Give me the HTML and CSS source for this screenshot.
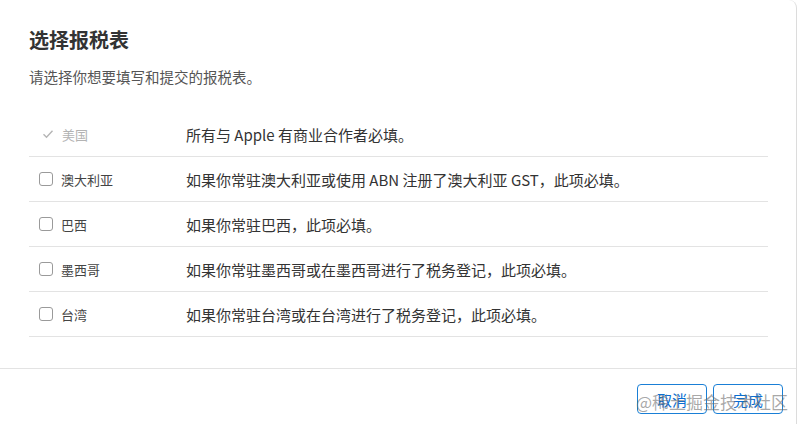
FILE: index.html
```html
<!DOCTYPE html>
<html lang="zh-CN">
<head>
  <meta charset="UTF-8">
  <meta name="viewport" content="width=device-width, initial-scale=1.0">
  <title>选择报税表</title>
  <link rel="stylesheet" href="styles.css">
</head>
<body>
  <div class="dialog">
    <div class="dialog-body">
      <h2 class="title">选择报税表</h2>
      <p class="intro">请选择你想要填写和提交的报税表。</p>

      <div class="form-list">
        <div class="form-row">
          <div class="form-name disabled">
            <svg class="check" viewBox="0 0 12 10" width="12" height="10">
              <path d="M1.5 5.2 L4.5 8.2 L10.5 1.8" fill="none" stroke="#b5b5b5" stroke-width="1.4"/>
            </svg>
            <span>美国</span>
          </div>
          <div class="form-desc">所有与 Apple 有商业合作者必填。</div>
        </div>
        <div class="form-row">
          <label class="form-name"><span class="box"></span><span>澳大利亚</span></label>
          <div class="form-desc">如果你常驻澳大利亚或使用 ABN 注册了澳大利亚 GST，此项必填。</div>
        </div>
        <div class="form-row">
          <label class="form-name"><span class="box"></span><span>巴西</span></label>
          <div class="form-desc">如果你常驻巴西，此项必填。</div>
        </div>
        <div class="form-row">
          <label class="form-name"><span class="box"></span><span>墨西哥</span></label>
          <div class="form-desc">如果你常驻墨西哥或在墨西哥进行了税务登记，此项必填。</div>
        </div>
        <div class="form-row">
          <label class="form-name"><span class="box"></span><span>台湾</span></label>
          <div class="form-desc">如果你常驻台湾或在台湾进行了税务登记，此项必填。</div>
        </div>
      </div>
    </div>

    <div class="dialog-footer">
      <button type="button" class="btn">取消</button>
      <button type="button" class="btn">完成</button>
      <div class="watermark">@稀土掘金技术社区</div>
    </div>
  </div>
</body>
</html>
```

FILE: styles.css
```css
body {
  margin: 0;
  font-family: "Noto Sans CJK SC", "Noto Sans", sans-serif;
  color: #333;
  background: #fff;
}
.dialog {
  width: 797px;
  height: 424px;
  box-sizing: border-box;
  border-right: 1px solid #dcdcdc;
  border-top-right-radius: 8px;
  display: flex;
  flex-direction: column;
}
.dialog-body {
  padding: 26px 29px 31px 29px;
  border-bottom: 1px solid #e3e3e3;
}
.title {
  margin: 0;
  font-size: 20px;
  line-height: 28px;
  font-weight: 700;
  color: #333;
}
.intro {
  margin: 13px 0 0;
  font-size: 14.5px;
  line-height: 20px;
  color: #555;
}
.form-list {
  margin-top: 25px;
  width: 739px;
}
.form-row {
  display: flex;
  align-items: center;
  height: 44px;
  border-bottom: 1px solid #e3e3e3;
}
.form-name {
  width: 157px;
  display: flex;
  align-items: center;
  padding-left: 10px;
  box-sizing: border-box;
  font-size: 13px;
  color: #444;
}
.form-name.disabled {
  color: #b3b3b3;
}
.check {
  margin: 0 8px 0 3px;
}
.box {
  width: 12px;
  height: 12px;
  border: 1px solid #9a9a9a;
  border-radius: 3px;
  margin-right: 8px;
}
.form-desc {
  font-size: 15px;
  color: #333;
}
.dialog-footer {
  position: relative;
  display: flex;
  justify-content: flex-end;
  gap: 6px;
  padding: 15px 13px 0 0;
}
.btn {
  width: 70px;
  height: 30px;
  background: #fff;
  border: 1px solid #1a7fd6;
  border-radius: 4px;
  color: #0a6ed1;
  font-family: "Noto Sans CJK SC", sans-serif;
  font-size: 15px;
  padding: 0;
}
.watermark {
  position: absolute;
  left: 636px;
  top: 20px;
  font-size: 17px;
  color: rgba(110, 110, 110, 0.6);
  pointer-events: none;
  white-space: nowrap;
}
```
